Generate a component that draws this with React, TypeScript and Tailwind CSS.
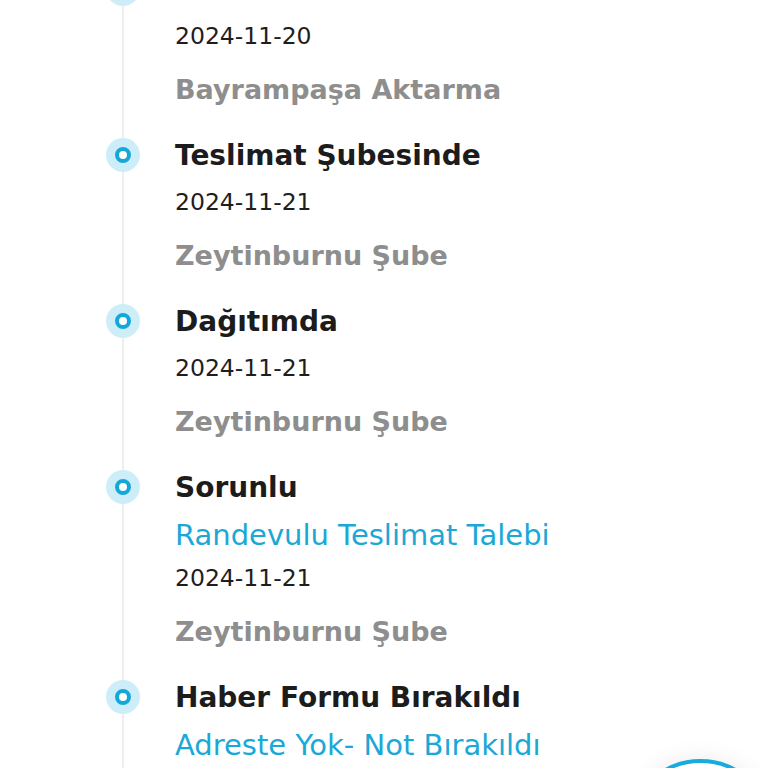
type Step = {
  title: string;
  note?: string;
  date: string;
  place: string;
};

const steps: Step[] = [
  { title: 'Yolda', date: '2024-11-20', place: 'Bayrampaşa Aktarma' },
  { title: 'Teslimat Şubesinde', date: '2024-11-21', place: 'Zeytinburnu Şube' },
  { title: 'Dağıtımda', date: '2024-11-21', place: 'Zeytinburnu Şube' },
  { title: 'Sorunlu', note: 'Randevulu Teslimat Talebi', date: '2024-11-21', place: 'Zeytinburnu Şube' },
  { title: 'Haber Formu Bırakıldı', note: 'Adreste Yok- Not Bırakıldı', date: '2024-11-22', place: 'Zeytinburnu Şube' },
];

export default function App() {
  return (
    <div
      className="relative h-[768px] overflow-hidden bg-white"
      style={{ fontFamily: '"DejaVu Sans", Inter, sans-serif' }}
    >
      {/* timeline çizgisi */}
      <div className="absolute left-[122px] top-0 h-full w-[2px] bg-[#eeeeee]" />

      <ul className="relative -mt-[30px] flex flex-col gap-[26px]">
        {steps.map((s, i) => (
          <TimelineItem key={i} step={s} />
        ))}
      </ul>

      {/* yüzen buton */}
      <div className="absolute left-[628px] top-[759px] h-[145px] w-[145px] rounded-full border-[4px] border-[#17acd9] bg-white shadow-[0_0_24px_rgba(0,0,0,0.08)]" />
    </div>
  );
}

function TimelineItem({ step: s }: { step: Step }) {
  return (
    <li className="flex pl-[106px]">
      <div className="flex h-[38px] w-[34px] shrink-0 items-center justify-center">
        <div className="flex h-[34px] w-[34px] items-center justify-center rounded-full bg-[#cdeef8]">
          <div className="h-[16px] w-[16px] rounded-full border-[4px] border-[#14a8d8] bg-white" />
        </div>
      </div>
      <div className="ml-[35px] flex flex-col">
        <div className="flex h-[40px] items-center text-[28px] font-bold text-[#1c1c1c]">{s.title}</div>
        {s.note && (
          <div className="mt-[8px] flex h-[40px] items-center text-[29px] font-normal text-[#1aa8d6]">{s.note}</div>
        )}
        <div
          className={`${s.note ? 'mt-[3px]' : 'mt-[7px]'} flex h-[40px] items-center text-[23.5px] font-normal text-[#1e1e1e]`}
        >
          {s.date}
        </div>
        <div className="mt-[13px] flex h-[40px] items-center text-[27px] font-bold text-[#8e8e8e]">{s.place}</div>
      </div>
    </li>
  );
}
